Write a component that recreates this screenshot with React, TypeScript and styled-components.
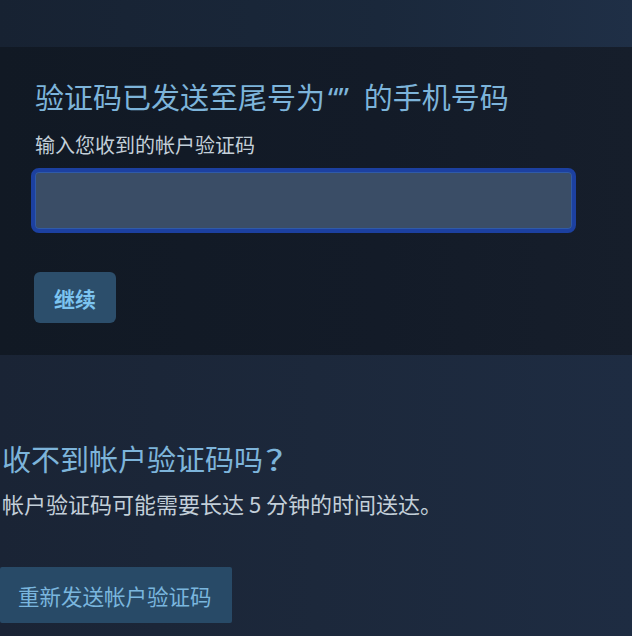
import styled, { createGlobalStyle } from "styled-components";

const GlobalStyle = createGlobalStyle`
    html, body {
        margin: 0;
        padding: 0;
        background: #1b2638;
        font-family: "Noto Sans CJK SC", "Noto Sans", "Liberation Sans", sans-serif;
    }
`

const Page = styled.div`
    width: 632px;
    height: 636px;
    overflow: hidden;
    display: flex;
    flex-direction: column;
`

const TopBand = styled.div`
    height: 47px;
    flex-shrink: 0;
    background: linear-gradient(90deg, #172232 0%, #1a283b 60%, #1f2f46 100%);
`

const Panel = styled.div`
    height: 308px;
    flex-shrink: 0;
    box-sizing: border-box;
    padding: 30px 35px 0;
    background: linear-gradient(90deg, #111924 0%, #131b28 60%, #161e2b 100%);
    display: flex;
    flex-direction: column;
    align-items: flex-start;
`

const Title = styled.h2`
    margin: 0;
    height: 38px;
    font-size: 29px;
    line-height: 38px;
    font-weight: 400;
    color: #7db4da;
    white-space: nowrap;
`

// the quotes in the reference are narrow western marks, not full-width ones
const Quotes = styled.span`
    font-family: "Noto Sans", "Liberation Sans", sans-serif;
    line-height: 1;
    margin: 0 15px 0 3px;
`

const Label = styled.div`
    margin-top: 16px;
    font-size: 20px;
    line-height: 28px;
    color: #c3cfd9;
`

const CodeInput = styled.input`
    margin-top: 9px;
    margin-left: -4px;
    width: 545px;
    height: 65px;
    box-sizing: border-box;
    border: 4px solid #1c40a0;
    border-radius: 8px;
    background: #3a4d66;
    box-shadow: inset 0 0 0 1px #2f5aa8;
    outline: none;
    color: #fff;
    font-size: 20px;
    padding: 0 12px;
`

const ContinueButton = styled.button`
    margin-top: 39px;
    margin-left: -1px;
    width: 82px;
    height: 51px;
    border: none;
    border-radius: 6px;
    background: #2c4e6b;
    color: #7cc4f0;
    font-family: inherit;
    font-size: 21px;
    font-weight: 700;
    cursor: pointer;
`

const Lower = styled.div`
    flex: 1;
    box-sizing: border-box;
    padding: 84px 0 0 2px;
    background: linear-gradient(90deg, #1a2435 0%, #1c283b 50%, #1e2c42 100%);
    display: flex;
    flex-direction: column;
    align-items: flex-start;
`

const Mark = styled.span`
    display: inline-block;
    line-height: 1;
    transform: scaleX(1.35);
    transform-origin: left center;
    margin-left: 2px;
`

const Body = styled.div`
    margin-top: 11px;
    font-size: 22px;
    line-height: 30px;
    color: #c3cfd9;
    white-space: nowrap;
`

const ResendButton = styled.button`
    margin-top: 49px;
    margin-left: -2px;
    width: 232px;
    height: 56px;
    border: none;
    border-radius: 2px;
    background: #284a67;
    color: #7ab6de;
    font-family: inherit;
    font-size: 21.5px;
    text-align: left;
    padding: 0 0 0 18px;
    cursor: pointer;
`

const App = () => {
    return (
        <Page>
            <GlobalStyle />
            <TopBand />
            <Panel>
                <Title>验证码已发送至尾号为<Quotes>“”</Quotes>的手机号码</Title>
                <Label>输入您收到的帐户验证码</Label>
                <CodeInput type="text" />
                <ContinueButton>继续</ContinueButton>
            </Panel>
            <Lower>
                <Title>收不到帐户验证码吗<Mark>?</Mark></Title>
                <Body>帐户验证码可能需要长达 5 分钟的时间送达。</Body>
                <ResendButton>重新发送帐户验证码</ResendButton>
            </Lower>
        </Page>
    )
}

export default App
